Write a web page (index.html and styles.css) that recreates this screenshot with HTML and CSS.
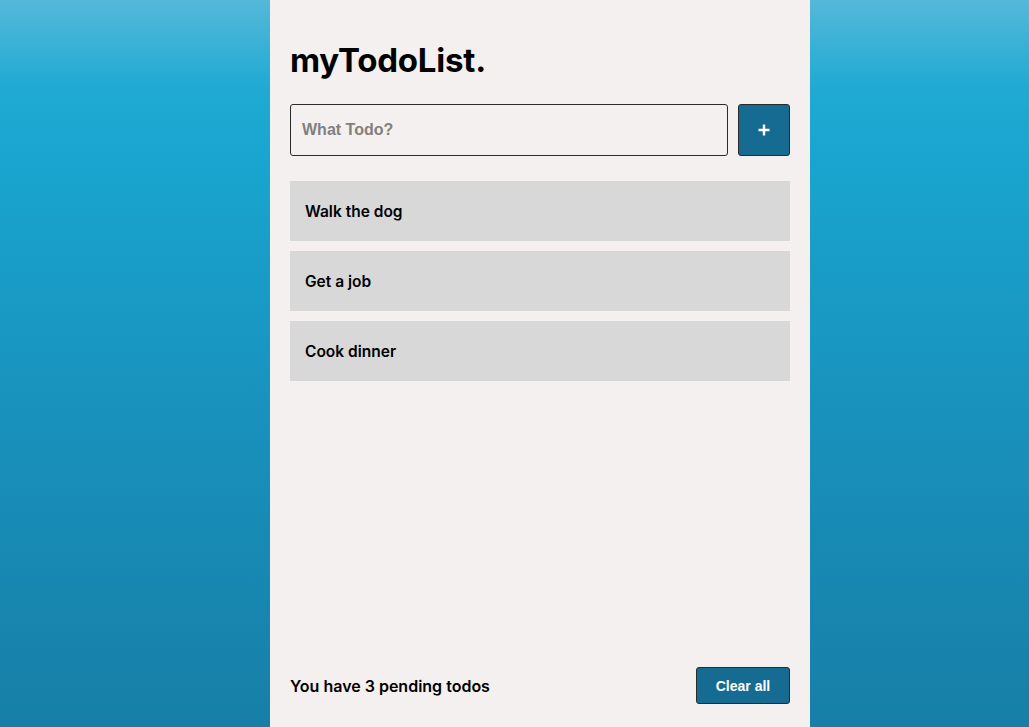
FILE: index.html
```html
<!DOCTYPE html>
<html lang="en">
<head>
<meta charset="utf-8">
<title>myTodoList.</title>
<link rel="stylesheet" href="styles.css">
</head>
<body>
<div class="app">
  <h1 class="title">myTodoList.</h1>
  <form class="add-row">
    <input class="todo-input" type="text" placeholder="What Todo?" autofocus>
    <button class="add-btn" type="button" aria-label="Add">
      <svg width="14" height="14" viewBox="0 0 14 14"><path d="M7 1.5v11M1.5 7h11" stroke="#fff" stroke-width="2.4" stroke-linecap="butt"/></svg>
    </button>
  </form>
  <ul class="todo-list">
    <li class="todo-item">Walk the dog</li>
    <li class="todo-item">Get a job</li>
    <li class="todo-item">Cook dinner</li>
  </ul>
  <div class="footer">
    <span class="pending">You have 3 pending todos</span>
    <button class="clear-btn" type="button">Clear all</button>
  </div>
</div>
</body>
</html>
```

FILE: styles.css
```css
* { box-sizing: border-box; }
html, body { height: 100%; }
body {
  margin: 0;
  background: linear-gradient(to bottom, #55b8d9 0%, #20aad3 12%, #18a5cf 22%, #1890bb 60%, #177fa7 100%);
  font-family: "Inter", "Liberation Sans", sans-serif;
  display: flex;
  justify-content: flex-start;
  padding-left: 270px;
}
.app {
  width: 540px;
  height: 727px;
  background: #f4f0ef;
  padding: 40px 20px 23px;
  display: flex;
  flex-direction: column;
}
.title {
  margin: 0;
  font-size: 33px;
  font-weight: 700;
  color: #000;
  line-height: 40px;
  letter-spacing: -0.2px;
}
.add-row {
  margin: 24px 0 0;
  display: flex;
  gap: 10px;
}
.todo-input {
  flex: 1;
  height: 52px;
  border: 1px solid #2a2a2a;
  border-radius: 3px;
  background: #f4f0ef;
  padding: 0 11px;
  font-family: "Liberation Sans", Arial, sans-serif;
  font-size: 16px;
  font-weight: 700;
  color: #222;
  outline: none;
}
.todo-input::placeholder { color: #808080; }
.add-btn {
  width: 52px;
  height: 52px;
  border: 1px solid #2a2a2a;
  border-radius: 3px;
  background: #156b92;
  display: flex;
  align-items: center;
  justify-content: center;
  padding: 0;
}
.todo-list {
  list-style: none;
  margin: 25px 0 0;
  padding: 0;
  display: flex;
  flex-direction: column;
  gap: 10px;
  flex: 1;
}
.todo-item {
  height: 60px;
  background: #d8d8d8;
  display: flex;
  align-items: center;
  padding: 0 15px;
  font-size: 15.5px;
  font-weight: 600;
  color: #000;
}
.footer {
  display: flex;
  align-items: center;
  justify-content: space-between;
}
.pending {
  font-size: 16px;
  font-weight: 600;
  color: #000;
}
.clear-btn {
  width: 94px;
  height: 37px;
  border: 1px solid #2a2a2a;
  border-radius: 3px;
  background: #156b92;
  color: #fff;
  font-family: "Liberation Sans", Arial, sans-serif;
  font-weight: 700;
  font-size: 14px;
  padding: 0;
}
```
